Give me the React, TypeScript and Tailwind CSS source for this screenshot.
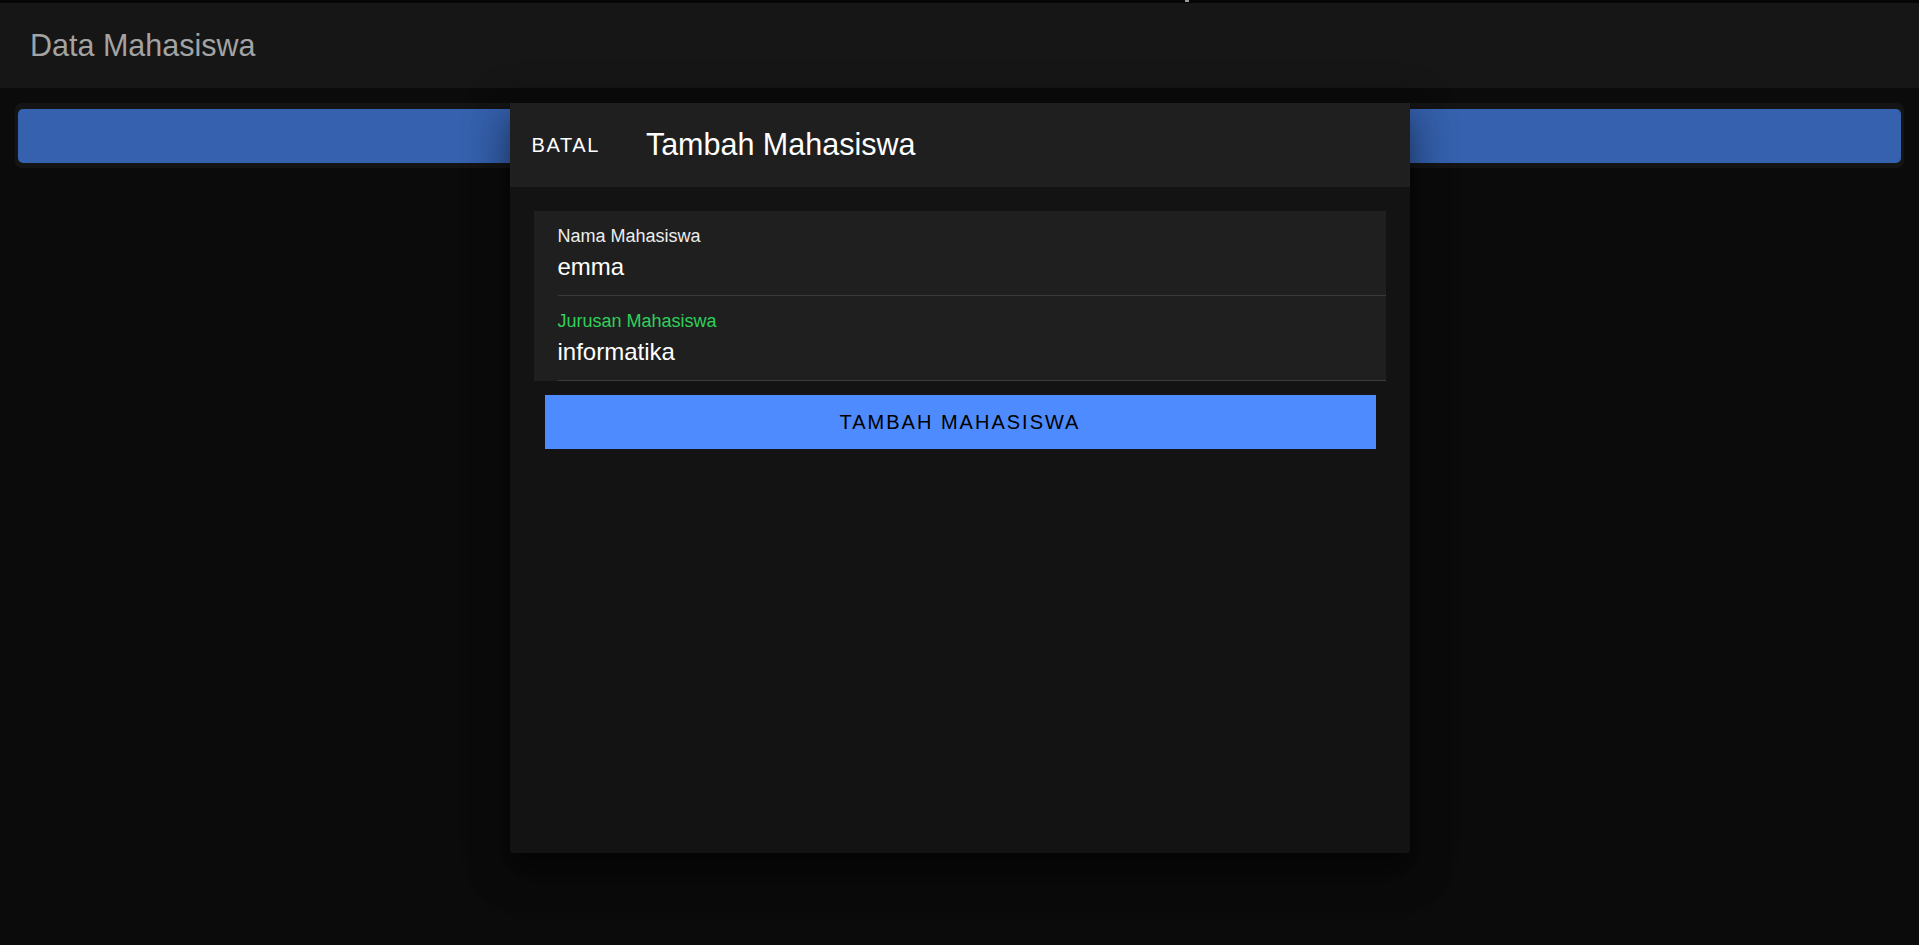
import { useState } from 'react'

const font = { fontFamily: '"Liberation Sans", Arial, sans-serif' }

function Field({ label, value, active }: { label: string; value: string; active?: boolean }) {
  return (
    <div className="ml-6 h-[85px] border-b border-[#3a3a3a] pt-[15px]">
      <div className={`text-[18px] leading-[20px] ${active ? 'text-[#2fcf5a]' : 'text-[#ededed]'}`}>{label}</div>
      <div className="mt-[8px] text-[24px] leading-[26px] text-white">{value}</div>
    </div>
  )
}

export default function App() {
  const [nama] = useState('emma')
  const [jurusan] = useState('informatika')

  return (
    <div className="relative h-[945px] w-full overflow-hidden bg-[#0b0b0b]" style={font}>
      <header className="flex h-[88px] items-center border-t-[3px] border-[#050505] bg-[#161616] pl-[30px]">
        <h1 className="text-[30.5px] text-[#a3a3a3]">Data Mahasiswa</h1>
      </header>
      <div className="absolute left-[1185px] top-0 h-[2px] w-[4px] bg-[#9a9a9a]" />

      <main className="px-[15px] pt-[15px]">
        <div className="rounded-[7px] bg-[#141414] px-[3px] pb-[5px] pt-[6px]">
          <div className="h-[54px] rounded-[5px] bg-[#3561ae]" />
        </div>
      </main>

      <div className="absolute inset-0 flex justify-center pt-[103px]">
        <div className="flex h-[750px] w-[900px] flex-col rounded-b-[3px] bg-[#131313] shadow-[0_11px_15px_-7px_rgba(0,0,0,0.35),0_24px_38px_3px_rgba(0,0,0,0.25),0_9px_46px_8px_rgba(0,0,0,0.2)]">
          <div className="flex h-[84px] items-center bg-[#1f1f1f] pl-[22px]">
            <button className="text-[20px] tracking-[1.6px] text-white">BATAL</button>
            <h2 className="ml-[46px] text-[30.5px] text-white">Tambah Mahasiswa</h2>
          </div>
          <div className="px-[24px] pt-[24px]">
            <div className="bg-[#1f1f1f]">
              <Field label="Nama Mahasiswa" value={nama} />
              <Field label="Jurusan Mahasiswa" value={jurusan} active />
            </div>
            <button className="ml-[11px] mt-[14px] h-[54px] w-[831px] bg-[#4e8bff] text-[20px] tracking-[2px] text-black">
              TAMBAH MAHASISWA
            </button>
          </div>
        </div>
      </div>
    </div>
  )
}
